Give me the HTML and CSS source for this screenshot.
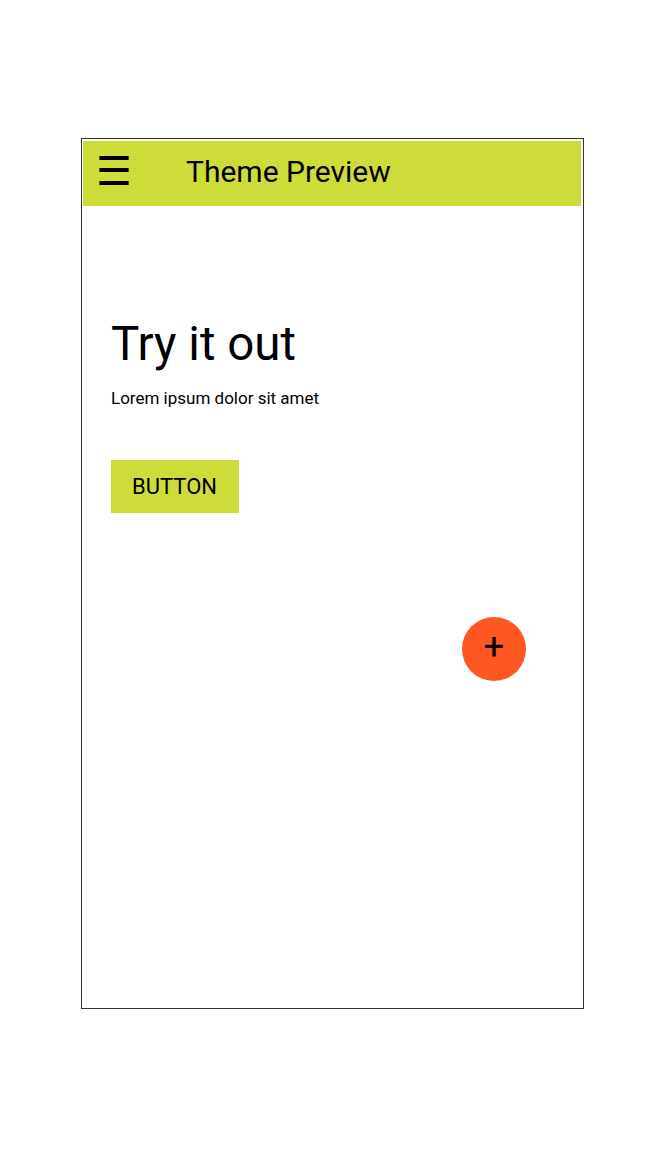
FILE: index.html
```html
<!DOCTYPE html>
<html>
<head>
<meta charset="utf-8">
<link rel="stylesheet" href="styles.css">
</head>
<body>
<div class="frame">
  <header class="appbar">
    <span class="menu">☰</span>
    <span class="title">Theme Preview</span>
  </header>
  <main class="content">
    <h1 class="headline">Try it out</h1>
    <p class="body">Lorem ipsum dolor sit amet</p>
    <button class="btn">BUTTON</button>
  </main>
  <div class="fab">+</div>
</div>
</body>
</html>
```

FILE: styles.css
```css
html, body {
  margin: 0;
  padding: 0;
  background: #ffffff;
}
body {
  font-family: Roboto, "Liberation Sans", sans-serif;
  color: #000;
  padding-top: 138px;
  padding-left: 81px;
}
.frame {
  position: relative;
  box-sizing: border-box;
  width: 503px;
  height: 871px;
  border: 1px solid #333333;
  padding: 2px 2px 0 1px;
}
.appbar {
  display: flex;
  align-items: center;
  height: 65px;
  background: #cddc39;
}
.menu {
  font-size: 40px;
  line-height: 1;
  margin-left: 13px;
  width: 90px;
  padding-bottom: 4px;
}
.title {
  font-size: 30px;
  line-height: 1;
  padding-bottom: 4px;
}
.content {
  padding: 110px 0 0 28px;
}
.headline {
  margin: 0;
  font-size: 47.5px;
  font-weight: 400;
  line-height: 56px;
}
.body {
  margin: 16px 0 0 0;
  font-size: 17px;
  line-height: 20px;
}
.btn {
  display: block;
  margin-top: 52px;
  width: 128px;
  height: 53px;
  border: none;
  background: #cddc39;
  font-family: Roboto, "Liberation Sans", sans-serif;
  font-size: 22px;
  color: #000;
  padding: 0 1px 0 0;
}
.fab {
  position: absolute;
  left: 380px;
  top: 478px;
  width: 64px;
  height: 64px;
  border-radius: 50%;
  background: #ff5722;
  display: flex;
  align-items: center;
  justify-content: center;
  font-size: 36px;
  line-height: 1;
  padding-bottom: 4px;
  box-sizing: border-box;
}
```
